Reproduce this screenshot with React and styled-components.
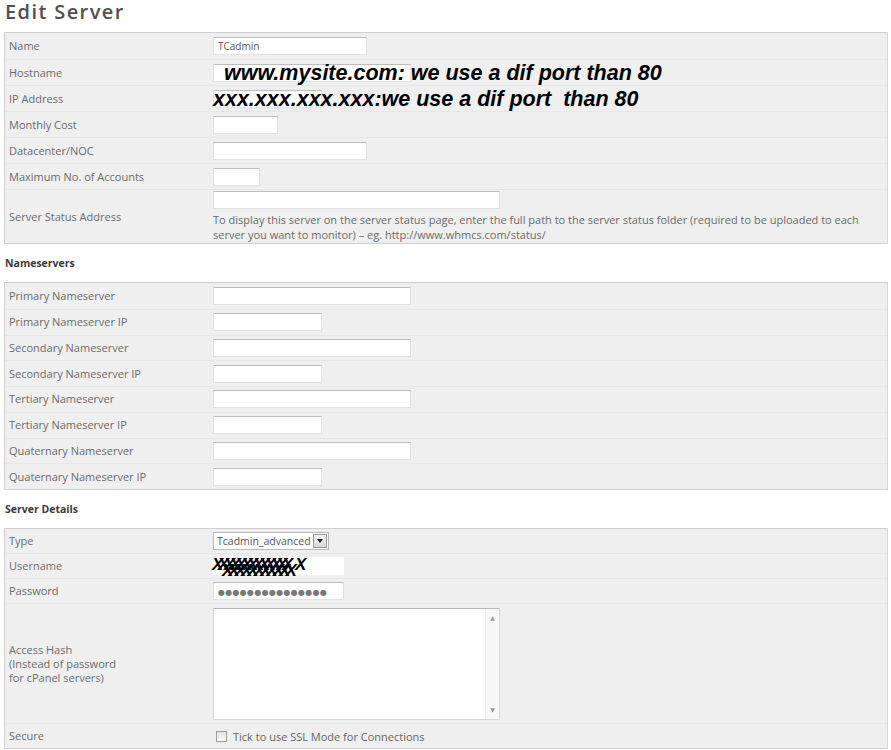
import React from "react";
import styled, { createGlobalStyle } from "styled-components";

const GlobalStyle = createGlobalStyle`
  body {
    margin: 0;
    background: #ffffff;
    font-family: "Open Sans", "DejaVu Sans", sans-serif;
  }
  * {
    box-sizing: border-box;
  }
`;

const Page = styled.div`
  width: 891px;
  padding: 0 3px 0 4px;
`;

const Title = styled.h2`
  margin: 0;
  padding: 0 0 0 1px;
  height: 32px;
  font-size: 20px;
  line-height: 24px;
  letter-spacing: 1.4px;
  font-weight: 600;
  color: #505050;
`;

const SectionTitle = styled.h3`
  margin: 0;
  padding: 0 0 0 1px;
  height: 38px;
  line-height: 38px;
  font-size: 10.5px;
  font-weight: 700;
  color: #3a3a3a;
`;

const FieldTable = styled.div`
  border: 1px solid #cfcfcf;
  border-right-color: #d8d8d8;
  background: #efefef;
`;

const Row = styled.div`
  display: grid;
  grid-template-columns: 204px 1fr;
  align-items: center;
  height: ${(p) => p.$h || 26}px;
  border-top: 1px solid #e7e7e7;
  &:first-child {
    border-top: none;
  }
`;

const Label = styled.div`
  padding-left: 4px;
  font-size: 11px;
  line-height: 14px;
  color: #6b6b6b;
`;

const Field = styled.div`
  padding: 0 4px;
  font-size: 11px;
  color: #666;
  position: relative;
`;

const Input = styled.div`
  width: ${(p) => p.$w}px;
  height: 18px;
  background: #fff;
  border: 1px solid #e2e2e2;
  border-top-color: #bdbdbd;
  font-size: 10px;
  line-height: 16px;
  padding: 0 4px;
  color: #555;
  white-space: nowrap;
`;

/* hand-typed annotation laid over the field */
const Scrawl = styled.span`
  position: absolute;
  left: ${(p) => p.$x}px;
  top: ${(p) => p.$y}px;
  font-family: "Liberation Sans", Arial, sans-serif;
  font-style: italic;
  font-weight: 700;
  font-size: 21.5px;
  line-height: 20px;
  color: #000;
  white-space: pre;
`;

const Help = styled.div`
  margin-top: 3px;
  font-size: 11px;
  line-height: 15px;
  color: #6b6b6b;
  white-space: nowrap;
`;

const Select = styled.div`
  display: flex;
  align-items: center;
  width: 116px;
  height: 18px;
  background: #fff;
  border: 1px solid #b9b9b9;
  font-size: 10.5px;
  color: #555;
  padding-left: 3px;
  justify-content: space-between;
`;

const SelectArrow = styled.span`
  width: 14px;
  height: 14px;
  margin-right: 1px;
  border: 1px solid #9a9a9a;
  background: linear-gradient(#f4f4f4, #d8d8d8);
  display: flex;
  align-items: center;
  justify-content: center;
  &::after {
    content: "";
    border-left: 3px solid transparent;
    border-right: 3px solid transparent;
    border-top: 4px solid #222;
  }
`;

const Dots = styled.span`
  font-size: 8px;
  letter-spacing: 0.3px;
  color: #777;
`;

const ScribbleBox = styled.div`
  position: relative;
  width: 131px;
  height: 18px;
  background: #fff;
`;

const Scribble = styled.span`
  position: absolute;
  left: ${(p) => p.$x}px;
  top: ${(p) => p.$y}px;
  font-family: "Liberation Sans", Arial, sans-serif;
  font-weight: 700;
  font-style: italic;
  font-size: 17px;
  line-height: 15px;
  letter-spacing: ${(p) => p.$ls}px;
  color: #000;
  white-space: pre;
`;

const TextArea = styled.div`
  display: flex;
  width: 287px;
  height: 112px;
  background: #fff;
  border: 1px solid #d6d6d6;
  border-top-color: #b5b5b5;
`;

const TextBody = styled.div`
  flex: 1;
`;

const ScrollBar = styled.div`
  width: 14px;
  background: #f7f7f7;
  border-left: 1px solid #ececec;
  display: flex;
  flex-direction: column;
  justify-content: space-between;
  align-items: center;
  padding: 5px 0;
  font-size: 6px;
  color: #999;
`;

const CheckLine = styled.label`
  display: flex;
  align-items: center;
  gap: 6px;
  padding-left: 3px;
  font-size: 11px;
  color: #666;
`;

const Box = styled.span`
  width: 11px;
  height: 11px;
  border: 1px solid #9c9c9c;
  background: linear-gradient(#e4e4e4, #fafafa);
`;

const nameservers = [
  ["Primary Nameserver", 198],
  ["Primary Nameserver IP", 109],
  ["Secondary Nameserver", 198],
  ["Secondary Nameserver IP", 109],
  ["Tertiary Nameserver", 198],
  ["Tertiary Nameserver IP", 109],
  ["Quaternary Nameserver", 198],
  ["Quaternary Nameserver IP", 109],
];

export default function App() {
  return (
    <Page>
      <GlobalStyle />
      <Title>Edit Server</Title>
      <FieldTable>
        <Row>
          <Label>Name</Label>
          <Field>
            <Input $w={154}>TCadmin</Input>
          </Field>
        </Row>
        <Row>
          <Label>Hostname</Label>
          <Field>
            <Input $w={198} />
            <Scrawl $x={15} $y={-1}>www.mysite.com: we use a dif port than 80</Scrawl>
          </Field>
        </Row>
        <Row>
          <Label>IP Address</Label>
          <Field>
            <Input $w={109} />
            <Scrawl $x={4} $y={-1}>xxx.xxx.xxx.xxx:we use a dif port  than 80</Scrawl>
          </Field>
        </Row>
        <Row>
          <Label>Monthly Cost</Label>
          <Field>
            <Input $w={65} />
          </Field>
        </Row>
        <Row>
          <Label>Datacenter/NOC</Label>
          <Field>
            <Input $w={154} />
          </Field>
        </Row>
        <Row>
          <Label>Maximum No. of Accounts</Label>
          <Field>
            <Input $w={47} />
          </Field>
        </Row>
        <Row $h={54}>
          <Label>Server Status Address</Label>
          <Field>
            <Input $w={287} />
            <Help>
              To display this server on the server status page, enter the full path to the server status folder (required to be uploaded to each
              <br />
              server you want to monitor) – eg. http://www.whmcs.com/status/
            </Help>
          </Field>
        </Row>
      </FieldTable>

      <SectionTitle>Nameservers</SectionTitle>
      <FieldTable>
        {nameservers.map(([label, w]) => (
          <Row key={label} $h={25.75}>
            <Label>{label}</Label>
            <Field>
              <Input $w={w} />
            </Field>
          </Row>
        ))}
      </FieldTable>

      <SectionTitle>Server Details</SectionTitle>
      <FieldTable>
        <Row $h={24}>
          <Label>Type</Label>
          <Field>
            <Select>
              Tcadmin_advanced
              <SelectArrow />
            </Select>
          </Field>
        </Row>
        <Row $h={25}>
          <Label>Username</Label>
          <Field>
            <ScribbleBox>
              <Scribble $x={-1} $y={0} $ls={-5.5}>XXXXXXXXXXXXX</Scribble>
              <Scribble $x={82} $y={0} $ls={0}>X</Scribble>
              <Scribble $x={9} $y={6} $ls={-5}>XXXXXXXXXXX</Scribble>
            </ScribbleBox>
          </Field>
        </Row>
        <Row $h={25}>
          <Label>Password</Label>
          <Field>
            <Input $w={131}>
              <Dots>●●●●●●●●●●●●●●●</Dots>
            </Input>
          </Field>
        </Row>
        <Row $h={120}>
          <Label>
            Access Hash
            <br />
            (Instead of password
            <br />
            for cPanel servers)
          </Label>
          <Field>
            <TextArea>
              <TextBody />
              <ScrollBar>
                <span>▲</span>
                <span>▼</span>
              </ScrollBar>
            </TextArea>
          </Field>
        </Row>
        <Row $h={25}>
          <Label>Secure</Label>
          <Field>
            <CheckLine>
              <Box />
              Tick to use SSL Mode for Connections
            </CheckLine>
          </Field>
        </Row>
      </FieldTable>
    </Page>
  );
}
